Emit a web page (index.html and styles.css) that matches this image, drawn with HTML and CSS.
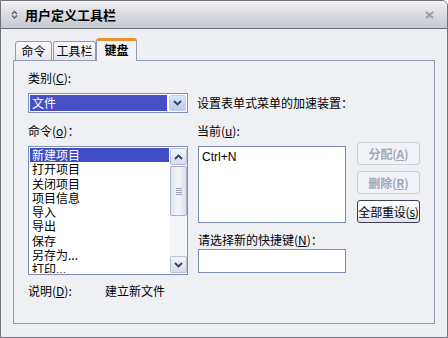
FILE: index.html
```html
<!DOCTYPE html>
<html lang="zh-CN">
<head>
  <meta charset="UTF-8" />
  <title>用户定义工具栏</title>
  <link rel="stylesheet" href="styles.css">
</head>
<body>
  <div class="window">
    <div class="titlebar">
      <svg class="title-icon" width="7" height="9" viewBox="0 0 7 9">
        <path d="M1 4 L3.5 1.5 L6 4 M1 5.5 L3.5 8 L6 5.5" fill="none" stroke="#5a5c66" stroke-width="1.3"/>
      </svg>
      <span class="title">用户定义工具栏</span>
      <svg class="close" width="9" height="8" viewBox="0 0 9 8">
        <path d="M1 1 L8 7 M8 1 L1 7" stroke="#9a9ca3" stroke-width="1.8"/>
      </svg>
    </div>

    <div class="content">
      <div class="tabs">
        <div class="tab tab-cmd">命令</div>
        <div class="tab tab-bar">工具栏</div>
        <div class="tab tab-key active">键盘</div>
      </div>

      <div class="panel">
        <div class="label first">类别(<u>C</u>):</div>

        <div class="row-cat">
          <div class="combo">
            <div class="combo-value">文件</div>
            <div class="combo-btn">
              <svg width="9" height="6" viewBox="0 0 9 6">
                <path d="M1 1 L4.5 4.5 L8 1" fill="none" stroke="#2f3f66" stroke-width="1.8"/>
              </svg>
            </div>
          </div>
          <div class="hint">设置表单式菜单的加速装置：</div>
        </div>

        <div class="row-heads">
          <div class="label col-left">命令(<u>o</u>)：</div>
          <div class="label">当前(<u>u</u>):</div>
        </div>

        <div class="row-main">
          <div class="listbox">
            <ul class="items">
              <li class="selected">新建项目</li>
              <li>打开项目</li>
              <li>关闭项目</li>
              <li>项目信息</li>
              <li>导入</li>
              <li>导出</li>
              <li>保存</li>
              <li>另存为...</li>
              <li>打印...</li>
            </ul>
            <div class="scrollbar">
              <div class="sb-btn">
                <svg width="9" height="6" viewBox="0 0 9 6">
                  <path d="M1 5 L4.5 1.5 L8 5" fill="none" stroke="#2f3f66" stroke-width="1.8"/>
                </svg>
              </div>
              <div class="sb-thumb">
                <span></span><span></span><span></span><span></span>
              </div>
              <div class="sb-track"></div>
              <div class="sb-btn">
                <svg width="9" height="6" viewBox="0 0 9 6">
                  <path d="M1 1 L4.5 4.5 L8 1" fill="none" stroke="#2f3f66" stroke-width="1.8"/>
                </svg>
              </div>
            </div>
          </div>

          <div class="col-mid">
            <div class="current">Ctrl+N</div>
            <div class="label small">请选择新的快捷键(<u>N</u>)：</div>
            <div class="newkey"></div>
          </div>

          <div class="buttons">
            <div class="btn disabled">分配(<u>A</u>)</div>
            <div class="btn disabled">删除(<u>R</u>)</div>
            <div class="btn">全部重设(<u>s</u>)</div>
          </div>
        </div>

        <div class="row-desc">
          <div class="label desc-key">说明(<u>D</u>):</div>
          <div class="label">建立新文件</div>
        </div>
      </div>
    </div>
  </div>
</body>
</html>
```

FILE: styles.css
```css
body {
  margin: 0;
  padding: 0;
  font-family: "Liberation Sans", "Noto Sans CJK SC", sans-serif;
  font-size: 12px;
  color: #000;
}
.window {
  width: 448px;
  height: 338px;
  box-sizing: border-box;
  border: 1px solid #707178;
  border-top-right-radius: 6px;
  background-color: #eeeff3;
  overflow: hidden;
}
.titlebar {
  height: 27px;
  border-bottom: 1px solid #6c6e76;
  background: linear-gradient(#f3f3f5, #dcdde2 45%, #c6c8d0);
  display: flex;
  align-items: center;
  padding-left: 10px;
}
.title {
  font-family: "Noto Sans CJK SC", sans-serif;
  font-weight: bold;
  font-size: 13px;
  line-height: 16px;
  margin-left: 7px;
}
.close {
  margin-left: auto;
  margin-right: 13px;
}
.content {
  padding: 9px 12px 0 12px;
}
.tabs {
  display: flex;
  align-items: flex-end;
  height: 22px;
  padding-left: 2px;
}
.tab {
  box-sizing: border-box;
  height: 19px;
  border: 1px solid #919bb9;
  border-bottom: none;
  border-radius: 3px 3px 0 0;
  background: linear-gradient(#fbfbfc, #e6e7ed);
  font-family: "Noto Sans CJK SC", sans-serif;
  line-height: 17px;
  text-align: center;
}
.tab-cmd { width: 37px; }
.tab-bar { width: 43px; margin-left: 1px; }
.tab-key { width: 41px; }
.tab.active {
  position: relative;
  height: 23px;
  margin-bottom: -1px;
  border-top: 3px solid #e8912f;
  background: #f2f3f6;
  font-weight: bold;
  line-height: 18px;
}
.panel {
  box-sizing: border-box;
  height: 264px;
  border: 1px solid #919bb9;
  background-color: #eff0f4;
  padding: 0 14px;
}
.label {
  font-family: "Noto Sans CJK SC", sans-serif;
  line-height: 16px;
}
.label.first {
  margin-top: 9px;
}
.label.small {
  line-height: 14px;
  margin-top: 10px;
}
.row-cat {
  display: flex;
  align-items: center;
  margin-top: 7px;
}
.combo {
  box-sizing: border-box;
  width: 160px;
  height: 20px;
  border: 1px solid #7f8db5;
  background: white;
  display: flex;
  padding: 1px;
}
.combo-value {
  flex: 1;
  background-color: #4650c4;
  color: white;
  font-family: "Noto Sans CJK SC", sans-serif;
  line-height: 16px;
  padding-left: 2px;
  margin-right: 2px;
}
.combo-btn {
  width: 17px;
  height: 16px;
  border-radius: 2px;
  background: linear-gradient(#dce5f8, #b8c8ec);
  border: 1px solid #c3cfee;
  box-sizing: border-box;
  display: flex;
  align-items: center;
  justify-content: center;
}
.hint {
  font-family: "Noto Sans CJK SC", sans-serif;
  line-height: 16px;
  margin-left: 9px;
}
.row-heads {
  display: flex;
  margin-top: 10px;
}
.col-left {
  width: 169px;
}
.row-main {
  display: flex;
  margin-top: 7px;
}
.listbox {
  box-sizing: border-box;
  width: 160px;
  height: 129px;
  border: 1px solid #7f8db5;
  background: white;
  display: flex;
  padding: 1px 0 1px 1px;
}
.items {
  list-style-type: none;
  margin: 0;
  padding: 0 1px 0 0;
  flex: 1;
  overflow: hidden;
}
.items li {
  font-family: "Noto Sans CJK SC", sans-serif;
  height: 14.25px;
  line-height: 13px;
  padding-left: 2px;
  white-space: nowrap;
}
.items li.selected {
  background-color: #3f4cc6;
  color: white;
}
.scrollbar {
  width: 17px;
  display: flex;
  flex-direction: column;
  background: #f4f5f8;
}
.sb-btn {
  box-sizing: border-box;
  height: 17px;
  border: 1px solid #b7bdd3;
  border-radius: 2px;
  background: linear-gradient(#f4f5fa, #d7dbea);
  display: flex;
  align-items: center;
  justify-content: center;
}
.sb-thumb {
  box-sizing: border-box;
  height: 50px;
  margin-top: 1px;
  border: 1px solid #a9afc9;
  border-radius: 2px;
  background: linear-gradient(90deg, #e3e6f0, #f4f5f9 50%, #dde0ec);
  display: flex;
  flex-direction: column;
  align-items: center;
  justify-content: center;
  gap: 1px;
}
.sb-thumb span {
  width: 6px;
  height: 1px;
  background: #9aa0b8;
}
.sb-track {
  flex: 1;
}
.col-mid {
  width: 148px;
  margin-left: 10px;
}
.current {
  box-sizing: border-box;
  height: 77px;
  border: 1px solid #7f8db5;
  background: white;
  padding: 2px 3px;
  line-height: 16px;
}
.newkey {
  box-sizing: border-box;
  height: 24px;
  margin-top: 2px;
  border: 1px solid #7f8db5;
  background: white;
}
.buttons {
  display: flex;
  flex-direction: column;
  gap: 6px;
  margin-left: 11px;
  margin-top: -4px;
}
.btn {
  box-sizing: border-box;
  width: 63px;
  height: 23px;
  border: 1px solid #3d3f52;
  border-radius: 3px;
  background: linear-gradient(#ffffff, #e4e5ec);
  font-family: "Noto Sans CJK SC", sans-serif;
  line-height: 21px;
  text-align: center;
  white-space: nowrap;
  letter-spacing: -0.2px;
}
.btn.disabled {
  border-color: #c9ccda;
  background: #f2f3f6;
  color: #a4a7ba;
  font-weight: bold;
}
.row-desc {
  display: flex;
  margin-top: 8px;
}
.desc-key {
  width: 77px;
}
```
